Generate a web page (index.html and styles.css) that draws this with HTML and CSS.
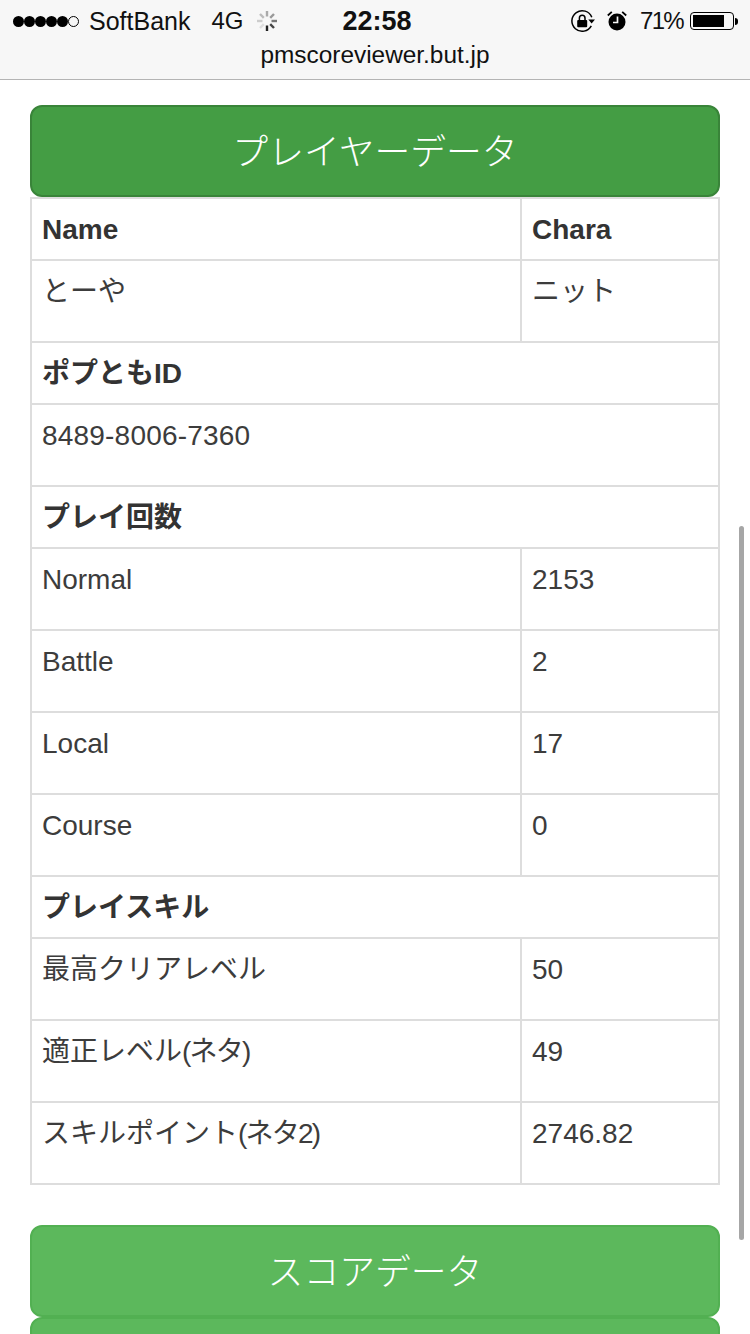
FILE: index.html
```html
<!DOCTYPE html>
<html lang="ja">
<head>
    <meta charset="UTF-8">
    <title>プレイヤーデータ</title>
    <link rel="stylesheet" href="styles.css">
</head>
<body>
    <div class="topbar">
        <div class="status">
            <div class="status-left">
                <div class="signal">
                    <i></i><i></i><i></i><i></i><i></i><i class="off"></i>
                </div>
                <span class="carrier">SoftBank</span>
                <span class="net">4G</span>
                <svg class="spinner" width="20" height="20" viewBox="0 0 20 20" stroke-width="2.400">
                    <path d="M10 14.500V20" stroke="#222"/>
                    <path d="M13.200 13.200l3.800 3.800" stroke="#444"/>
                    <path d="M14.500 10H20" stroke="#777"/>
                    <path d="M13.200 6.800L17 3" stroke="#999"/>
                    <path d="M10 5.500V0" stroke="#aaa"/>
                    <path d="M6.800 6.800L3 3" stroke="#bbb"/>
                    <path d="M5.500 10H0" stroke="#ccc"/>
                    <path d="M6.800 13.200L3 17" stroke="#ddd"/>
                </svg>
            </div>
            <div class="time">22:58</div>
            <div class="status-right">
                <svg class="rotlock" width="24" height="24" viewBox="0 0 24 24">
                    <path d="M20.300 16.800A10.300 10.300 0 1 1 20.800 8.300" fill="none" stroke="#000" stroke-width="1.500"/>
                    <path d="M17.300 10.500h6.700l-3.400 4z" fill="#000"/>
                    <rect x="6.200" y="11" width="10" height="7.200" rx="1" fill="#000"/>
                    <path d="M8.400 11V9a2.800 2.800 0 0 1 5.600 0v2" fill="none" stroke="#000" stroke-width="1.500"/>
                </svg>
                <svg class="alarm" width="20" height="22" viewBox="0 0 20 22">
                    <circle cx="10" cy="12" r="8.500" fill="#000"/>
                    <path d="M10.500 6.500v6H6" fill="none" stroke="#f7f7f7" stroke-width="1.700"/>
                    <path d="M.8 5.500L4.800 1.800M19.200 5.500L15.200 1.800" stroke="#000" stroke-width="1.800"/>
                </svg>
                <span class="percent">71%</span>
                <div class="battery"><div class="battery-fill"></div></div>
                <div class="battery-tip"></div>
            </div>
        </div>
        <div class="url">pmscoreviewer.but.jp</div>
    </div>

    <div class="content">
        <a class="btn btn-active">プレイヤーデータ</a>
        <table class="data">
            <tr>
                <th class="col-main">Name</th>
                <th>Chara</th>
            </tr>
            <tr>
                <td><p>とーや</p></td>
                <td><p>ニット</p></td>
            </tr>
            <tr><th colspan="2">ポプともID</th></tr>
            <tr><td colspan="2"><p class="friend-id">8489-8006-7360</p></td></tr>
            <tr><th colspan="2">プレイ回数</th></tr>
            <tr>
                <td><p>Normal</p></td>
                <td><p>2153</p></td>
            </tr>
            <tr>
                <td><p>Battle</p></td>
                <td><p>2</p></td>
            </tr>
            <tr>
                <td><p>Local</p></td>
                <td><p>17</p></td>
            </tr>
            <tr>
                <td><p>Course</p></td>
                <td><p>0</p></td>
            </tr>
            <tr><th colspan="2">プレイスキル</th></tr>
            <tr>
                <td><p>最高クリアレベル</p></td>
                <td><p>50</p></td>
            </tr>
            <tr>
                <td><p>適正レベル<span class="tight">(ネタ)</span></p></td>
                <td><p>49</p></td>
            </tr>
            <tr>
                <td><p>スキルポイント<span class="tight">(ネタ2)</span></p></td>
                <td><p>2746.82</p></td>
            </tr>
        </table>
        <a class="btn btn-score">スコアデータ</a>
        <a class="btn"></a>
    </div>

    <div class="scrollbar"></div>
</body>
</html>
```

FILE: styles.css
```css
html, body {
    margin: 0;
    height: 1334px;
    overflow: hidden;
    background: #fff;
}

body {
    position: relative;
    font-family: "Liberation Sans", "Noto Sans CJK JP", sans-serif;
    color: #333;
}

/* status bar + url */
.topbar {
    height: 79px;
    background: #f7f7f7;
    border-bottom: 1px solid #b4b4b4;
    color: #111;
}

.status {
    display: grid;
    grid-template-columns: 1fr auto 1fr;
    align-items: center;
    height: 38px;
    padding: 2px 12px 0 13px;
}

.status-left, .status-right {
    display: flex;
    align-items: center;
}

.status-right {
    justify-content: flex-end;
}

.signal {
    display: flex;
    margin-right: 10px;
}

.signal i {
    width: 11px;
    height: 11px;
    border-radius: 50%;
    background: #000;
    box-sizing: border-box;
}

.signal i.off {
    background: none;
    border: 1px solid #000;
}

.carrier {
    font-size: 25px;
}

.net {
    margin-left: 21px;
    font-size: 24px;
}

.spinner {
    margin-left: 14px;
}

.time {
    margin-left: 3px;
    font-size: 27px;
    font-weight: bold;
}

.rotlock {
    margin-right: 12px;
}

.alarm {
    margin-right: 13px;
}

.percent {
    margin-right: 7px;
    font-size: 24px;
    letter-spacing: -1.7px;
}

.battery {
    width: 44px;
    height: 18px;
    box-sizing: border-box;
    border: 1px solid #000;
    border-radius: 4px;
    padding: 2px;
}

.battery-fill {
    width: 31px;
    height: 12px;
    background: #000;
}

.battery-tip {
    width: 3px;
    height: 7px;
    margin-left: 1px;
    background: #000;
    border-radius: 0 3px 3px 0;
}

.url {
    text-align: center;
    font-size: 24.4px;
    line-height: 30px;
}

/* page */
.content {
    padding: 25px 30px 0;
}

.btn {
    display: block;
    box-sizing: border-box;
    height: 92px;
    border: 2px solid #52b052;
    border-radius: 12px;
    background: #5cb85c;
    color: #fff;
    font-size: 35.8px;
    font-weight: 300;
    line-height: 92px;
    text-align: center;
}

.btn-active {
    background: #449d44;
    border-color: #398439;
}

.btn-score {
    margin-top: 40px;
}

.data {
    width: 100%;
    border-collapse: collapse;
    font-size: 28px;
    line-height: 40px;
}

.data th, .data td {
    border: 2px solid #ddd;
    padding: 11px 10px 9px;
    text-align: left;
    vertical-align: top;
}

.data td {
    color: #3c3c3c;
}

.data p {
    margin: 0 0 20px;
}

.col-main {
    width: 490px;
    box-sizing: border-box;
}

.friend-id {
    letter-spacing: 0.2px;
}

.tight {
    letter-spacing: -1.8px;
}

.scrollbar {
    position: absolute;
    top: 526px;
    right: 6px;
    width: 5px;
    height: 714px;
    border-radius: 3px;
    background: #a6a6a6;
}
```
